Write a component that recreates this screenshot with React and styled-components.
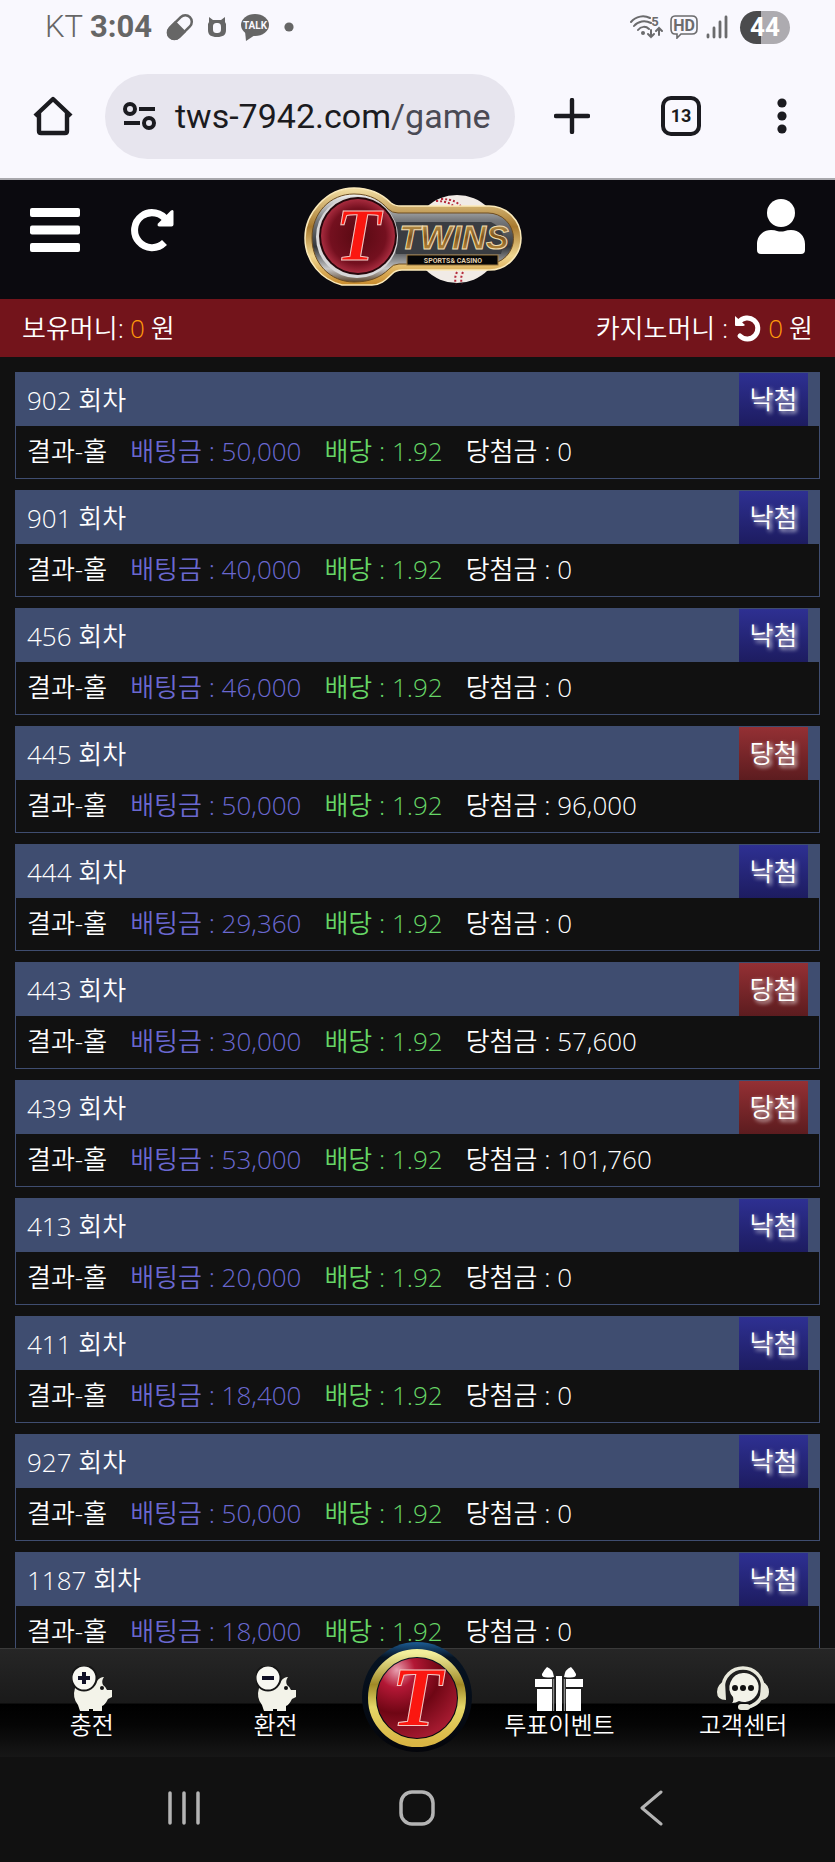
import React from "react";
import styled, { createGlobalStyle } from "styled-components";

const juegos = [
  { ronda: "902", apuesta: "50,000", premio: "0" },
  { ronda: "901", apuesta: "40,000", premio: "0" },
  { ronda: "456", apuesta: "46,000", premio: "0" },
  { ronda: "445", apuesta: "50,000", premio: "96,000", gano: true },
  { ronda: "444", apuesta: "29,360", premio: "0" },
  { ronda: "443", apuesta: "30,000", premio: "57,600", gano: true },
  { ronda: "439", apuesta: "53,000", premio: "101,760", gano: true },
  { ronda: "413", apuesta: "20,000", premio: "0" },
  { ronda: "411", apuesta: "18,400", premio: "0" },
  { ronda: "927", apuesta: "50,000", premio: "0" },
  { ronda: "1187", apuesta: "18,000", premio: "0" },
];

export default function App() {
  return (
    <>
      <Global />
      <Pagina>
        <BarraEstado />
        <Navegador />
        <Cabecera />
        <Saldos>
          <Saldo>
            보유머니: <Monto>0</Monto> 원
          </Saldo>
          <Saldo>
            카지노머니 :
            <BotonIcono type="button" aria-label="새로고침">
              <IconoDeshacer />
            </BotonIcono>
            <Monto>0</Monto> 원
          </Saldo>
        </Saldos>
        <Lista>
          {juegos.map((juego) => (
            <Juego key={juego.ronda} {...juego} />
          ))}
        </Lista>
        <MenuInferior />
        <TeclasSistema />
      </Pagina>
    </>
  );
}

const BarraEstado = () => (
  <Estado>
    <Grupo $gap={14}>
      <Hora>
        KT <b>3:04</b>
      </Hora>
      <svg width="28" height="28" viewBox="0 0 28 28">
        <g transform="rotate(-45 14 14)">
          <rect x="0" y="7.500" width="28" height="13" rx="6.500" fill="none" stroke="#666" strokeWidth="2.500" />
          <path d="M15 6.300H6a7.700 7.700 0 0 0 0 15.400h9z" fill="#666" />
        </g>
      </svg>
      <svg width="18" height="20" viewBox="0 0 18 20">
        <path
          d="M1 0l4 3h8l4-3v5l1 2v6c0 5-3 7-9 7s-9-2-9-7V7l1-2zM9 6c-3 0-4 1-4 4v2c0 3 1 4 4 4s4-1 4-4v-2c0-3-1-4-4-4z"
          fill="#666"
          fillRule="evenodd"
        />
      </svg>
      <svg width="30" height="28" viewBox="0 0 30 28">
        <ellipse cx="15" cy="12" rx="14" ry="11" fill="#666" />
        <path d="M5 18l1 10 9-6z" fill="#666" />
        <LetraIcono x="15" y="16" fontSize="10" fill="#f9f8fe">TALK</LetraIcono>
      </svg>
      <svg width="10" height="10" viewBox="0 0 10 10">
        <circle cx="5" cy="5" r="4.600" fill="#666" />
      </svg>
    </Grupo>
    <Grupo $gap={6}>
      <svg width="34" height="24" viewBox="0 0 34 24">
        <g fill="none" stroke="#6b6b6d" strokeWidth="2" strokeLinecap="round">
          <path d="M1 7C6 1 14 0 20 3M4 11c4-5 11-6 17-3M8 15c3-4 8-4 11-1" />
          <path d="M21 15v7m-3-3l3 3 3-3M29 20v-7m-3 3l3-3 3 3" />
        </g>
        <circle cx="13" cy="18" r="2" fill="#6b6b6d" />
        <LetraIcono x="25" y="11" fontSize="13" fill="#6b6b6d">5</LetraIcono>
      </svg>
      <svg width="28" height="24" viewBox="0 0 28 24">
        <path
          d="M5 1h17q5 0 5 5v8q0 5-5 5H11l-4 4v-4H5q-4 0-4-5V6q0-5 4-5z"
          fill="none"
          stroke="#6b6b6d"
          strokeWidth="1.6"
        />
        <LetraIcono x="14" y="16" fontSize="16" fill="#6b6b6d">HD</LetraIcono>
      </svg>
      <svg width="30" height="24" viewBox="0 0 30 24">
        <path
          d="M4 20v2M10 13v9M16 7v15M22 2v20"
          stroke="#6b6b6d"
          strokeWidth="2.8"
          strokeLinecap="round"
        />
      </svg>
      <Bateria>44</Bateria>
    </Grupo>
  </Estado>
);

const Navegador = () => (
  <Herramientas>
    <BotonIcono type="button" aria-label="홈">
      <svg width="40" height="40" viewBox="0 0 40 40">
        <path
          d="M2 20L20 3l18 17M6 17v18q0 2 2 2h24q2 0 2-2V17"
          fill="none"
          stroke="#1b1b20"
          strokeWidth="4.400"
          strokeLinejoin="round"
        />
      </svg>
    </BotonIcono>
    <Direccion type="button">
      <svg width="34" height="28" viewBox="0 0 34 28">
        <g fill="none" stroke="#1b1b20" strokeWidth="4">
          <circle cx="7" cy="7" r="5" />
          <path d="M16 7h16M1 21h16" />
          <circle cx="26" cy="21" r="5" />
        </g>
      </svg>
      <Url>
        tws-7942.com<Ruta>/game</Ruta>
      </Url>
    </Direccion>
    <Acciones>
      <BotonIcono type="button" aria-label="새 탭">
        <svg width="36" height="36" viewBox="0 0 36 36">
          <path d="M18 2v32M2 18h32" stroke="#1b1b20" strokeWidth="4.400" strokeLinecap="round" />
        </svg>
      </BotonIcono>
      <Pestanas type="button">13</Pestanas>
      <BotonIcono type="button" aria-label="메뉴">
        <svg width="20" height="36" viewBox="0 0 20 36">
          <g fill="#1b1b20">
            <circle cx="10" cy="5" r="4.6" />
            <circle cx="10" cy="18" r="4.6" />
            <circle cx="10" cy="31" r="4.6" />
          </g>
        </svg>
      </BotonIcono>
    </Acciones>
  </Herramientas>
);

const Cabecera = () => (
  <Encabezado>
    <Izquierda>
      <BotonIcono type="button" aria-label="전체 메뉴">
        <svg width="50" height="44" viewBox="0 0 50 44">
          <g fill="#fff">
            <rect width="50" height="9" rx="2" />
            <rect y="17.500" width="50" height="9" rx="2" />
            <rect y="35" width="50" height="9" rx="2" />
          </g>
        </svg>
      </BotonIcono>
      <BotonIcono type="button" aria-label="다시 불러오기">
        <svg width="46" height="44" viewBox="0 0 46 44">
          <path
            d="M37 13A17.500 17.500 0 1 0 34.500 34.500"
            fill="none"
            stroke="#fff"
            strokeWidth="7"
          />
          <path d="M41 2.500q2.500-1.500 2.500 1v13q0 2-2 2H29.500q-3-.5-1.500-3z" fill="#fff" />
        </svg>
      </BotonIcono>
    </Izquierda>
    <EnlaceLogo href="#inicio" aria-label="TWINS">
      <Logo />
    </EnlaceLogo>
    <Derecha>
      <BotonIcono type="button" aria-label="내 정보">
        <svg width="48" height="56" viewBox="0 0 48 56">
          <circle cx="24" cy="14" r="14" fill="#fff" />
          <path
            d="M14 31q4 0 6 1 4 1 8 0 2-1 6-1c8 0 14 6 14 14v6q0 4-4 4H4q-4 0-4-4v-6c0-8 6-14 14-14z"
            fill="#fff"
          />
        </svg>
      </BotonIcono>
    </Derecha>
  </Encabezado>
);

const Logo = () => (
  <svg width="218" height="102" viewBox="0 0 218 102">
    <defs>
      <linearGradient id="oro" x1="0" y1="0" x2="0" y2="1">
        <stop offset="0" stopColor="#f3dfa5" />
        <stop offset="0.4" stopColor="#a8792e" />
        <stop offset="0.7" stopColor="#f0d68f" />
        <stop offset="1" stopColor="#c88a2b" />
      </linearGradient>
      <linearGradient id="plata" x1="0" y1="0" x2="0" y2="1">
        <stop offset="0" stopColor="#f4f4f4" />
        <stop offset="0.3" stopColor="#77797c" />
        <stop offset="0.6" stopColor="#33363a" />
        <stop offset="0.85" stopColor="#c9c9c9" />
        <stop offset="1" stopColor="#5c4630" />
      </linearGradient>
      <linearGradient id="letras" x1="0" y1="0" x2="0" y2="1">
        <stop offset="0" stopColor="#d9b566" />
        <stop offset="0.5" stopColor="#7d531b" />
        <stop offset="1" stopColor="#cfa04c" />
      </linearGradient>
      <radialGradient id="granate">
        <stop offset="0" stopColor="#580912" />
        <stop offset="0.75" stopColor="#74101f" />
        <stop offset="1" stopColor="#a82b3e" />
      </radialGradient>
    </defs>
    <circle cx="153" cy="53" r="44" fill="#f1ebe6" />
    <g fill="none" stroke="#b5293a" strokeWidth="2" strokeDasharray="2 2">
      <path d="M132 15q16 0 20 9M137 13q17 0 21 10M153 86q-3 6-1 12M159 86q-3 6-1 12" />
    </g>
    <path
      d="M50 2c18 0 29 7 37 15q4 3 10 3h88a31 31 0 0 1 0 64H98q-6 0-10 4c-7 7-12 11-20 11H38C18 94 1 76 1 52S22 2 50 2z"
      fill="url(#oro)"
      stroke="#fbeabb"
      strokeWidth="1.500"
    />
    <path
      d="M50 8c17 0 27 7 34 15q4 4 10 4h90a25 25 0 0 1 0 51H95q-6 0-10 5c-9 9-20 13-35 13C26 96 8 77 8 52S26 8 50 8z"
      fill="url(#plata)"
      stroke="#6d4d22"
      strokeWidth="1"
    />
    <path d="M92 36h95q18 8 10 32H92z" fill="#3a3d42" />
    <circle cx="53" cy="51" r="41" fill="#d7d7d8" />
    <circle cx="54" cy="50" r="39" fill="#25070b" />
    <circle cx="54" cy="50" r="37" fill="url(#granate)" />
    <LetraT x="54" y="74" fontSize="74">T</LetraT>
    <Marca x="150" y="63" fontSize="34">TWINS</Marca>
    <rect x="103" y="69" width="91" height="10" fill="#060607" stroke="#9a773d" strokeWidth="1" />
    <LetraIcono x="149" y="76.500" fontSize="7" fill="#e0cfb0">SPORTS&amp; CASINO</LetraIcono>
  </svg>
);

const IconoDeshacer = () => (
  <svg width="28" height="28" viewBox="0 0 28 28">
    <path d="M5 8A10.500 10.500 0 1 1 6 22" fill="none" stroke="#fff" strokeWidth="5" strokeLinecap="round" />
    <path d="M1 2l10 9q-1 1-2 1H2q-1 0-1-1z" fill="#fff" />
  </svg>
);

const Juego = ({ ronda, apuesta, premio, gano }) => (
  <Tarjeta>
    <TituloTarjeta>
      <span>{ronda} 회차</span>
      <Resultado $gano={gano}>{gano ? "당첨" : "낙첨"}</Resultado>
    </TituloTarjeta>
    <Detalle>
      <Dato>결과-홀</Dato>
      <Dato $color="#6a68d0">배팅금 : {apuesta}</Dato>
      <Dato $color="#66d666">배당 : 1.92</Dato>
      <Dato>당첨금 : {premio}</Dato>
    </Detalle>
  </Tarjeta>
);

const Alcancia = ({ retiro }) => (
  <svg width="40" height="46" viewBox="0 0 40 46">
    <path
      d="M3 22q12-2 22-7 3-4 7-4-3 4-1 8 3 2 4 5h5v7l-4 2q-3 6-6 7v5h-9v-2h-4v2H8q-1-3-2-6Q0 32 3 22z"
      fill="#f3f3e9"
    />
    <circle cx="30" cy="22" r="2" fill="#111" />
    <circle cx="12" cy="12" r="12.500" fill="#f8f8f2" stroke="#161616" strokeWidth="2" />
    <path d={retiro ? "M6 12h12" : "M6 12h12M12 6v12"} stroke="#101026" strokeWidth="4" />
  </svg>
);

const Regalo = () => (
  <svg width="50" height="46" viewBox="0 0 50 46">
    <g fill="#fff">
      <path d="M20 11Q7 13 8 8q2-4 5-7 6 2 7 10zM30 11q13 2 12-3-2-4-5-7-6 2-7 10z" />
      <path d="M1 13h17v8H1zM32 13h17v8H32zM3 23h15v22H3zM32 23h15v22H32zM22 10h6v35h-6z" />
    </g>
    <path d="M19.500 13v32M30.500 13v32" stroke="#888" strokeWidth="1.500" />
  </svg>
);

const Auricular = () => (
  <svg width="54" height="46" viewBox="0 0 54 46">
    <path d="M7 22a20 20 0 0 1 40 0q0 17-19 20" fill="none" stroke="#e9e9dc" strokeWidth="3.500" />
    <path d="M9 15q-8 3-8 11t9 8zM45 15q8 3 8 11t-9 8z" fill="#e9e9dc" />
    <rect x="22" y="38" width="12" height="6" rx="3" fill="#e9e9dc" />
    <path d="M27 7a14.500 14.500 0 1 1-4 28q-3 2-7 2 2-2 1-6A14.500 14.500 0 0 1 27 7z" fill="#f3f3e9" />
    <g fill="#111">
      <circle cx="19" cy="22" r="3" />
      <circle cx="27" cy="22" r="3" />
      <circle cx="35" cy="22" r="3" />
    </g>
  </svg>
);

const MenuInferior = () => (
  <Menu>
    <Opcion href="#charge">
      <Alcancia />
      충전
    </Opcion>
    <Opcion href="#exchange">
      <Alcancia retiro />
      환전
    </Opcion>
    <Centro>
      <BotonCentral type="button" aria-label="홈">
        <svg width="112" height="116" viewBox="0 0 112 116">
          <defs>
            <linearGradient id="aro" x1="0" y1="0" x2="0" y2="1">
              <stop offset="0" stopColor="#f2ef9c" />
              <stop offset="0.35" stopColor="#a08926" />
              <stop offset="0.6" stopColor="#e4d768" />
              <stop offset="1" stopColor="#d9b544" />
            </linearGradient>
            <linearGradient id="halo" x1="0" y1="0" x2="0" y2="1">
              <stop offset="0" stopColor="#1c5c94" />
              <stop offset="0.14" stopColor="#061322" />
              <stop offset="1" stopColor="#04050a" />
            </linearGradient>
            <radialGradient id="boton" cx="0.25" cy="0.15" r="0.9">
              <stop offset="0" stopColor="#e9a0b0" />
              <stop offset="0.25" stopColor="#b31735" />
              <stop offset="0.6" stopColor="#6f0614" />
              <stop offset="1" stopColor="#a51a30" />
            </radialGradient>
          </defs>
          <circle cx="56" cy="60" r="55" fill="url(#halo)" />
          <circle cx="56" cy="61" r="45" fill="none" stroke="url(#aro)" strokeWidth="8" />
          <circle cx="56" cy="61" r="40" fill="url(#boton)" />
          <LetraT x="56" y="89" fontSize="84">T</LetraT>
        </svg>
      </BotonCentral>
    </Centro>
    <Opcion href="#event">
      <Regalo />
      투표이벤트
    </Opcion>
    <Opcion href="#support">
      <Auricular />
      고객센터
    </Opcion>
  </Menu>
);

const TeclasSistema = () => (
  <Teclas>
    <BotonIcono type="button" aria-label="최근 앱">
      <svg width="36" height="36" viewBox="0 0 36 36">
        <path d="M4 3v30M18 3v30M32 3v30" stroke="#b4b4b4" strokeWidth="3.500" strokeLinecap="round" />
      </svg>
    </BotonIcono>
    <BotonIcono type="button" aria-label="홈 화면">
      <svg width="36" height="36" viewBox="0 0 36 36">
        <rect x="2" y="2" width="32" height="32" rx="11" fill="none" stroke="#b4b4b4" strokeWidth="3.500" />
      </svg>
    </BotonIcono>
    <BotonIcono type="button" aria-label="뒤로">
      <svg width="36" height="36" viewBox="0 0 36 36">
        <path
          d="M28 2L9 18l19 16"
          fill="none"
          stroke="#b4b4b4"
          strokeWidth="3"
          strokeLinecap="round"
          strokeLinejoin="round"
        />
      </svg>
    </BotonIcono>
  </Teclas>
);

const Global = createGlobalStyle`
  * {
    box-sizing: border-box;
  }

  body {
    margin: 0;
    background: #111;
  }

  svg {
    display: block;
    flex-shrink: 0;
  }

  button {
    font: inherit;
    border: 0;
    padding: 0;
    background: none;
    cursor: pointer;
  }
`;

const Pagina = styled.div`
  display: flex;
  flex-direction: column;
  height: 100vh;
  font-family: "Open Sans", "Noto Sans CJK KR", sans-serif;
  font-size: 26px;
  font-weight: 350;
  line-height: 32px;
  color: #fff;
`;

const Grupo = styled.div`
  display: flex;
  align-items: center;
  gap: ${({ $gap }) => $gap}px;
`;

const Estado = styled.div`
  display: flex;
  justify-content: space-between;
  align-items: center;
  flex-shrink: 0;
  height: 54px;
  padding: 0 45px;
  background: #f9f8fe;
`;

const Hora = styled.span`
  font-family: Roboto, sans-serif;
  font-size: 31px;
  line-height: 36px;
  color: #666;

  b {
    font-weight: 700;
  }
`;

const Bateria = styled.span`
  width: 50px;
  height: 33px;
  border-radius: 17px;
  background: linear-gradient(90deg, #4b4b4d 42%, #adabb0 42%);
  color: #fff;
  font-family: Roboto, sans-serif;
  font-size: 26px;
  font-weight: 700;
  line-height: 33px;
  text-align: center;
`;

const LetraIcono = styled.text`
  font-family: Roboto, sans-serif;
  font-weight: 700;
  text-anchor: middle;
`;

const LetraT = styled.text`
  font-family: "Liberation Serif", serif;
  font-style: italic;
  font-weight: 700;
  text-anchor: middle;
  fill: #fb1710;
  stroke: #f3c9c4;
  stroke-width: 1px;
`;

const Marca = styled.text`
  font-family: "Liberation Sans", sans-serif;
  font-style: italic;
  font-weight: 700;
  text-anchor: middle;
  fill: url(#letras);
  stroke: #f1dcae;
  stroke-width: 1px;
`;

const Herramientas = styled.div`
  display: flex;
  align-items: center;
  flex-shrink: 0;
  height: 126px;
  padding: 0 43px 0 33px;
  background: #f9f8fe;
  border-bottom: 2px solid #a9a8ad;
`;

const BotonIcono = styled.button`
  display: inline-flex;
  align-items: center;
  justify-content: center;
`;

const Direccion = styled.button`
  display: flex;
  align-items: center;
  flex: 1;
  gap: 18px;
  min-width: 0;
  height: 85px;
  margin: 0 39px 0 32px;
  padding: 0 12px 0 18px;
  border-radius: 43px;
  background: #e7e5ee;
`;

const Url = styled.span`
  font-family: Roboto, sans-serif;
  font-size: 34px;
  font-weight: 400;
  color: #1b1b20;
  white-space: nowrap;
`;

const Ruta = styled.span`
  color: #4a4a54;
`;

const Acciones = styled.div`
  display: flex;
  align-items: center;
  gap: 71px;
`;

const Pestanas = styled.button`
  width: 40px;
  height: 40px;
  border: 4px solid #1b1b20;
  border-radius: 10px;
  color: #1b1b20;
  font-family: Roboto, sans-serif;
  font-size: 18px;
  font-weight: 700;
  line-height: 32px;
`;

const Encabezado = styled.header`
  display: grid;
  grid-template-columns: 1fr auto 1fr;
  align-items: center;
  flex-shrink: 0;
  height: 119px;
  padding: 6px 30px 11px;
  background: #0b0a0f;
`;

const Izquierda = styled.div`
  display: flex;
  align-items: center;
  gap: 50px;
  margin-bottom: 14px;
`;

const EnlaceLogo = styled.a`
  display: block;
  margin-right: 10px;
`;

const Derecha = styled.div`
  display: flex;
  justify-content: flex-end;
  margin-bottom: 20px;
`;

const Saldos = styled.div`
  display: flex;
  justify-content: space-between;
  align-items: center;
  flex-shrink: 0;
  height: 58px;
  padding: 0 22px;
  background: #73141b;
`;

const Saldo = styled.div`
  display: flex;
  align-items: center;
  gap: 6px;
`;

const Monto = styled.span`
  color: #ff9b0a;
`;

const Lista = styled.main`
  display: flex;
  flex-direction: column;
  flex: 1;
  gap: 11px;
  min-height: 0;
  overflow: hidden;
  padding: 15px 15px 0;
`;

const Tarjeta = styled.section`
  flex-shrink: 0;
  border: 1px solid #3f4d70;
`;

const TituloTarjeta = styled.div`
  display: flex;
  justify-content: space-between;
  align-items: center;
  height: 53px;
  padding: 0 11px;
  background: #3f4d70;
`;

const Resultado = styled.span`
  width: 69px;
  height: 53px;
  line-height: 53px;
  text-align: center;
  text-shadow: 2px 2px 4px #fff;
  background: ${({ $gano }) =>
    $gano ? "linear-gradient(#943034, #5c1c1f)" : "linear-gradient(#2e3092, #1d1c60)"};
`;

const Detalle = styled.div`
  display: flex;
  align-items: center;
  gap: 23px;
  height: 52px;
  padding: 0 11px 2px;
`;

const Dato = styled.span`
  color: ${({ $color }) => $color || "#fff"};
  white-space: nowrap;
`;

const Menu = styled.nav`
  display: grid;
  grid-template-columns: 22fr 22fr 12fr 22fr 22fr;
  flex-shrink: 0;
  height: 109px;
  border-top: 1px solid #3a3a3a;
  background: linear-gradient(#262626, #1a1a1a 50%, #000 51%, #050505 70%, #171717);
`;

const Opcion = styled.a`
  display: flex;
  flex-direction: column;
  align-items: center;
  padding-top: 17px;
  color: #fff;
  font-size: 24px;
  line-height: 26px;
  text-decoration: none;
  white-space: nowrap;
`;

const Centro = styled.div`
  position: relative;
`;

/* sobresale por encima del menu */
const BotonCentral = styled.button`
  position: absolute;
  top: -12px;
  left: 50%;
  transform: translateX(-50%);
`;

const Teclas = styled.div`
  display: grid;
  grid-template-columns: repeat(3, 28%);
  justify-content: center;
  flex-shrink: 0;
  height: 105px;
  padding-bottom: 4px;
  background: #111;
`;
